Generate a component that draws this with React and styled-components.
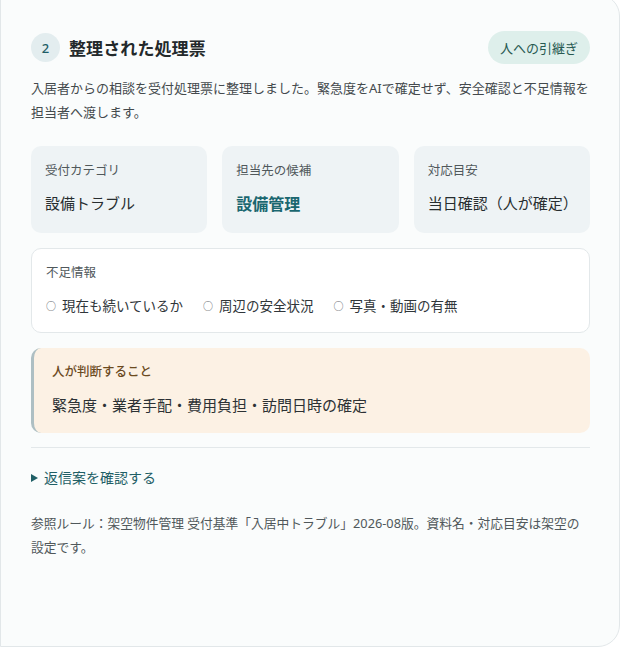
import React from 'react';
import styled, { createGlobalStyle } from 'styled-components';

const GlobalStyle = createGlobalStyle`
  html, body {
    margin: 0;
    padding: 0;
    background: #ffffff;
  }
  body {
    font-family: "Noto Sans", "Noto Sans CJK JP", sans-serif;
    color: #2a2f31;
    overflow: hidden;
  }
`;

const Card = styled.section`
  box-sizing: border-box;
  width: 620px;
  height: 653px;
  margin-top: -6px;
  padding: 36px 29px 0 30px;
  background: #fafcfc;
  border: 1px solid #e2e7e9;
  border-radius: 0 22px 22px 0;
  display: flex;
  flex-direction: column;
`;

const Header = styled.header`
  display: flex;
  align-items: center;
  justify-content: space-between;
  height: 33px;
`;

const TitleGroup = styled.div`
  display: flex;
  align-items: center;
  gap: 9px;
`;

const StepNumber = styled.span`
  width: 29px;
  height: 29px;
  border-radius: 50%;
  background: #e3edef;
  color: #1e5d66;
  font-size: 13px;
  font-weight: 500;
  display: flex;
  align-items: center;
  justify-content: center;
`;

const Title = styled.h2`
  margin: 0;
  font-size: 17px;
  font-weight: 600;
  color: #23292b;
  letter-spacing: 0.1px;
`;

const Badge = styled.span`
  height: 33px;
  padding: 0 12px;
  border-radius: 17px;
  background: #deefeb;
  color: #285a52;
  font-size: 13px;
  display: flex;
  align-items: center;
`;

const Description = styled.p`
  margin: 12px 0 0;
  font-size: 13px;
  line-height: 24px;
  color: #444a4d;
`;

const TileRow = styled.div`
  display: grid;
  grid-template-columns: repeat(3, 1fr);
  gap: 15px;
  margin-top: 22px;
`;

const Tile = styled.div`
  height: 87px;
  box-sizing: border-box;
  padding: 15px 14px 0;
  border-radius: 10px;
  background: #eef3f5;
`;

const Label = styled.div`
  font-size: 12.5px;
  line-height: 20px;
  color: ${p => p.$tone || '#50585b'};
  font-weight: ${p => p.$weight || 400};
`;

const Value = styled.div`
  margin-top: ${p => (p.$accent ? '12px' : '11px')};
  font-size: ${p => (p.$accent ? '16px' : '15px')};
  line-height: 22px;
  font-weight: ${p => (p.$accent ? 700 : 400)};
  color: ${p => (p.$accent ? '#1a6770' : '#272d2f')};
`;

const Box = styled.div`
  box-sizing: border-box;
  height: 85px;
  margin-top: ${p => p.$gap || '15px'};
  padding: 14px 14px 0 ${p => (p.$bar ? '18px' : '14px')};
  border-radius: 10px;
  background: ${p => p.$bg || '#ffffff'};
  border: ${p => (p.$bar ? 'none' : '1px solid #e3e8ea')};
  border-left: ${p => (p.$bar ? '3px solid #aebfc3' : '1px solid #e3e8ea')};
`;

const MissingList = styled.ul`
  list-style: none;
  margin: 12px 0 0;
  padding: 0;
  display: flex;
  gap: 20px;
  font-size: 13.5px;
  line-height: 22px;
  color: #30363a;
`;

const MissingItem = styled.li`
  &::before {
    content: '○';
    font-size: 10px;
    margin-right: 6px;
    color: #5c6468;
    position: relative;
    top: -1px;
  }
`;

const Decision = styled.div`
  margin-top: 12px;
  font-size: 15px;
  line-height: 22px;
  color: #2c3134;
`;

const Divider = styled.hr`
  margin: 14px 0 0;
  border: none;
  border-top: 1px solid #e3e8ea;
`;

const Disclosure = styled.div`
  margin-top: 18px;
  display: flex;
  align-items: center;
  gap: 6px;
  color: #1f5f66;
  font-size: 14px;
  line-height: 24px;

  &::before {
    content: '';
    width: 0;
    height: 0;
    border-left: 7px solid #1f5f66;
    border-top: 4.5px solid transparent;
    border-bottom: 4.5px solid transparent;
  }
`;

const Footnote = styled.p`
  margin: 21px 0 0;
  font-size: 12.75px;
  line-height: 24px;
  color: #50585b;
`;

const tiles = [
  { label: '受付カテゴリ', value: '設備トラブル' },
  { label: '担当先の候補', value: '設備管理', accent: true },
  { label: '対応目安', value: '当日確認（人が確定）' },
];

const missing = ['現在も続いているか', '周辺の安全状況', '写真・動画の有無'];

export default function App() {
  return (
    <>
      <GlobalStyle />
      <Card>
        <Header>
          <TitleGroup>
            <StepNumber>2</StepNumber>
            <Title>整理された処理票</Title>
          </TitleGroup>
          <Badge>人への引継ぎ</Badge>
        </Header>
        <Description>
          入居者からの相談を受付処理票に整理しました。緊急度をAIで確定せず、安全確認と不足情報を担当者へ渡します。
        </Description>
        <TileRow>
          {tiles.map(t => (
            <Tile key={t.label}>
              <Label>{t.label}</Label>
              <Value $accent={t.accent}>{t.value}</Value>
            </Tile>
          ))}
        </TileRow>
        <Box>
          <Label>不足情報</Label>
          <MissingList>
            {missing.map(m => (
              <MissingItem key={m}>{m}</MissingItem>
            ))}
          </MissingList>
        </Box>
        <Box $bar $bg="#fcf1e4">
          <Label $tone="#6b4a1e" $weight={500}>人が判断すること</Label>
          <Decision>緊急度・業者手配・費用負担・訪問日時の確定</Decision>
        </Box>
        <Divider />
        <Disclosure>返信案を確認する</Disclosure>
        <Footnote>
          参照ルール：架空物件管理 受付基準「入居中トラブル」2026-08版。資料名・対応目安は架空の設定です。
        </Footnote>
      </Card>
    </>
  );
}
